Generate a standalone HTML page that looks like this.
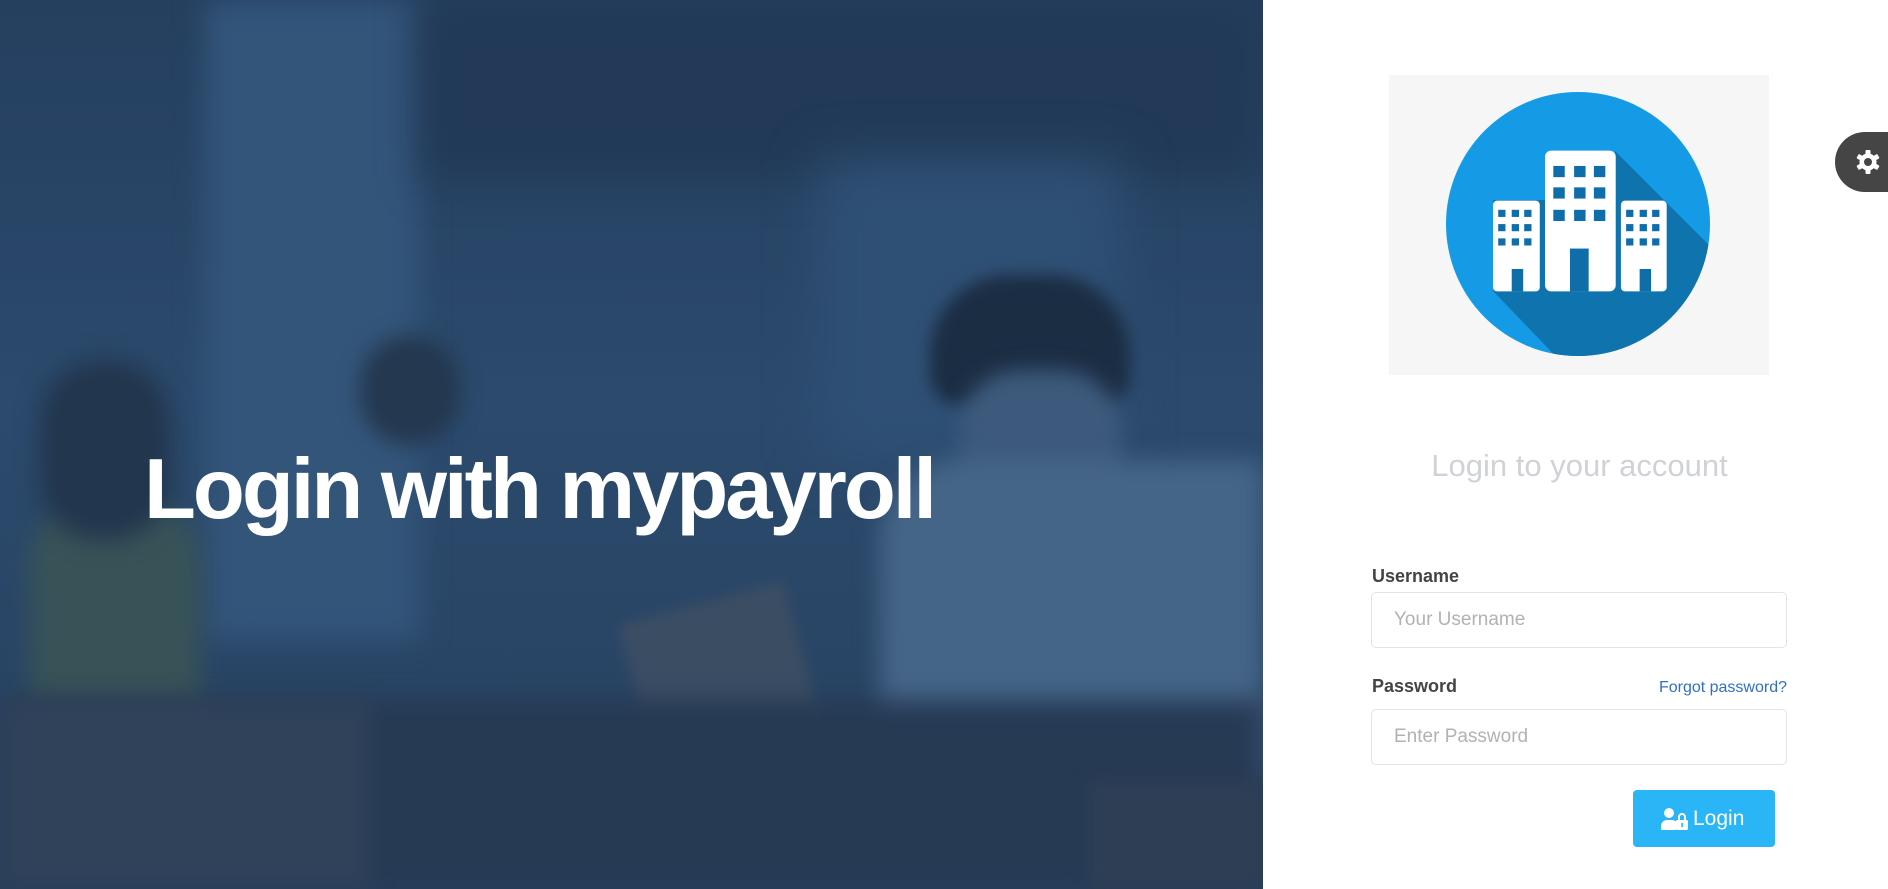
<!DOCTYPE html>
<html><head><meta charset="utf-8"><style>
*{margin:0;padding:0;box-sizing:border-box}
html,body{width:1888px;height:889px;overflow:hidden;background:#fff;font-family:"Liberation Sans",Arial,sans-serif}
#left{position:absolute;left:0;top:0;width:1263px;height:889px;background:#2a4667;overflow:hidden}
#left div{position:absolute}
h1{position:absolute;left:144px;top:440px;font-size:85px;letter-spacing:-3px;color:#fff;font-weight:bold;line-height:100px;white-space:nowrap}
.logo{position:absolute;left:1389px;top:75px;width:380px;height:300px;background:#f6f6f6}
.gear{position:absolute;left:1835px;top:132px;width:60px;height:60px;background:#454545;border-radius:30px 0 0 30px}
.title{position:absolute;left:1372px;width:415px;top:448px;text-align:center;font-size:31px;color:#cfd2d6}
.lbl{position:absolute;left:1372px;font-size:18px;font-weight:bold;color:#444}
.inp{position:absolute;left:1371px;width:416px;height:56px;border:1px solid #e4e4e4;border-radius:5px;padding-left:22px;line-height:54px;font-size:19px;color:#b2b2b2}
.fg{position:absolute;right:101px;top:679px;font-size:16px;color:#2f6fcc}
.btn{position:absolute;left:1633px;top:790px;width:142px;height:57px;background:#29b5f6;border-radius:4px;color:#fff;font-size:21px;line-height:57px}
</style></head><body>
<div id="left">
 <div style="left:0;top:0;width:1263px;height:889px;background:linear-gradient(180deg,#253f5f 0%,#2b4a6d 45%,#27415f 100%)"></div>
 <div style="left:205px;top:0;width:215px;height:640px;background:#33557a;filter:blur(14px)"></div>
 <div style="left:420px;top:0;width:843px;height:180px;background:#223a57;filter:blur(20px)"></div>
 <div style="left:820px;top:160px;width:300px;height:300px;background:#2f5075;filter:blur(25px)"></div>
 <div style="left:30px;top:500px;width:170px;height:300px;background:#3c5654;border-radius:60px;filter:blur(12px);opacity:.8"></div>
 <div style="left:40px;top:360px;width:130px;height:180px;background:#22364d;border-radius:60px;filter:blur(12px)"></div>
 <div style="left:360px;top:335px;width:100px;height:110px;background:#24384f;border-radius:50px;filter:blur(10px)"></div>
 <div style="left:930px;top:275px;width:200px;height:130px;background:#1b2d43;border-radius:80px 80px 30px 30px;filter:blur(8px)"></div>
 <div style="left:960px;top:370px;width:160px;height:200px;background:#3d5a7c;border-radius:60px;filter:blur(10px)"></div>
 <div style="left:880px;top:460px;width:383px;height:320px;background:#456588;border-radius:80px 0 0 0;filter:blur(12px)"></div>
 <div style="left:640px;top:600px;width:170px;height:190px;background:#3b4d63;transform:rotate(-15deg);filter:blur(6px)"></div>
 <div style="left:0;top:700px;width:1263px;height:189px;background:#263a54;filter:blur(12px)"></div>
 <div style="left:0;top:700px;width:370px;height:189px;background:#2f425a;filter:blur(10px)"></div>
 <div style="left:1090px;top:780px;width:173px;height:109px;background:#2e3f55;filter:blur(8px)"></div>
</div>
<h1>Login with mypayroll</h1>
<div class="logo"><svg width="380" height="300" viewBox="0 0 380 300">
<defs><clipPath id="c"><circle cx="189" cy="149" r="132"/></clipPath></defs>
<circle cx="189" cy="149" r="132" fill="#159be6"/>
<polygon clip-path="url(#c)" points="226,76 420,270 420,420 300,420 104,216 104,125 226,125" fill="#0f73ae"/>
<g transform="matrix(1.04 0 0 1.02 0 43)">
<rect x="100" y="81" width="45" height="89" rx="4" fill="#fff"/>
<rect x="150" y="32" width="68" height="138" rx="6" fill="#fff"/>
<rect x="223" y="81" width="44" height="89" rx="4" fill="#fff"/>
<g fill="#0f6eaa">
<rect x="118" y="148" width="11" height="22"/><rect x="174" y="128" width="18" height="42"/><rect x="241" y="148" width="11" height="22"/>
<rect x="105" y="90" width="7" height="7"/><rect x="118" y="90" width="7" height="7"/><rect x="130" y="90" width="7" height="7"/>
<rect x="105" y="104" width="7" height="7"/><rect x="118" y="104" width="7" height="7"/><rect x="130" y="104" width="7" height="7"/>
<rect x="105" y="118" width="7" height="7"/><rect x="118" y="118" width="7" height="7"/><rect x="130" y="118" width="7" height="7"/>
<rect x="228" y="90" width="7" height="7"/><rect x="241" y="90" width="7" height="7"/><rect x="253" y="90" width="7" height="7"/>
<rect x="228" y="104" width="7" height="7"/><rect x="241" y="104" width="7" height="7"/><rect x="253" y="104" width="7" height="7"/>
<rect x="228" y="118" width="7" height="7"/><rect x="241" y="118" width="7" height="7"/><rect x="253" y="118" width="7" height="7"/>
<rect x="158" y="47" width="11" height="11"/><rect x="178" y="47" width="11" height="11"/><rect x="197" y="47" width="11" height="11"/>
<rect x="158" y="68" width="11" height="11"/><rect x="178" y="68" width="11" height="11"/><rect x="197" y="68" width="11" height="11"/>
<rect x="158" y="90" width="11" height="11"/><rect x="178" y="90" width="11" height="11"/><rect x="197" y="90" width="11" height="11"/>
</g></g></svg></div>
<div class="gear"><svg style="position:absolute;left:20px;top:17px" width="26" height="26" viewBox="0 0 26 26"><g fill="#fff"><circle cx="13" cy="13" r="8.5"/><g><rect x="10.5" y="1" width="5" height="24" rx="1"/><rect x="10.5" y="1" width="5" height="24" rx="1" transform="rotate(60 13 13)"/><rect x="10.5" y="1" width="5" height="24" rx="1" transform="rotate(120 13 13)"/></g></g><circle cx="13" cy="13" r="4" fill="#454545"/></svg></div>
<div class="title">Login to your account</div>
<div class="lbl" style="top:566px">Username</div>
<div class="inp" style="top:592px">Your Username</div>
<div class="lbl" style="top:676px">Password</div>
<div class="fg">Forgot password?</div>
<div class="inp" style="top:709px">Enter Password</div>
<div class="btn"><svg style="position:absolute;left:28px;top:18px" width="28" height="22" viewBox="0 0 28 22"><g fill="#fff"><circle cx="8" cy="5" r="5"/><path d="M0 22v-4a6 6 0 0 1 6-6h5a6 6 0 0 1 4 1.5V22z"/><rect x="15" y="12" width="12" height="10" rx="1.5"/><path d="M17 12v-3a4 4 0 0 1 8 0v3h-2v-3a2 2 0 0 0-4 0v3z"/></g><rect x="20.3" y="15" width="1.6" height="4" fill="#29b5f6"/></svg><span style="position:absolute;left:60px">Login</span></div>
</body></html>
